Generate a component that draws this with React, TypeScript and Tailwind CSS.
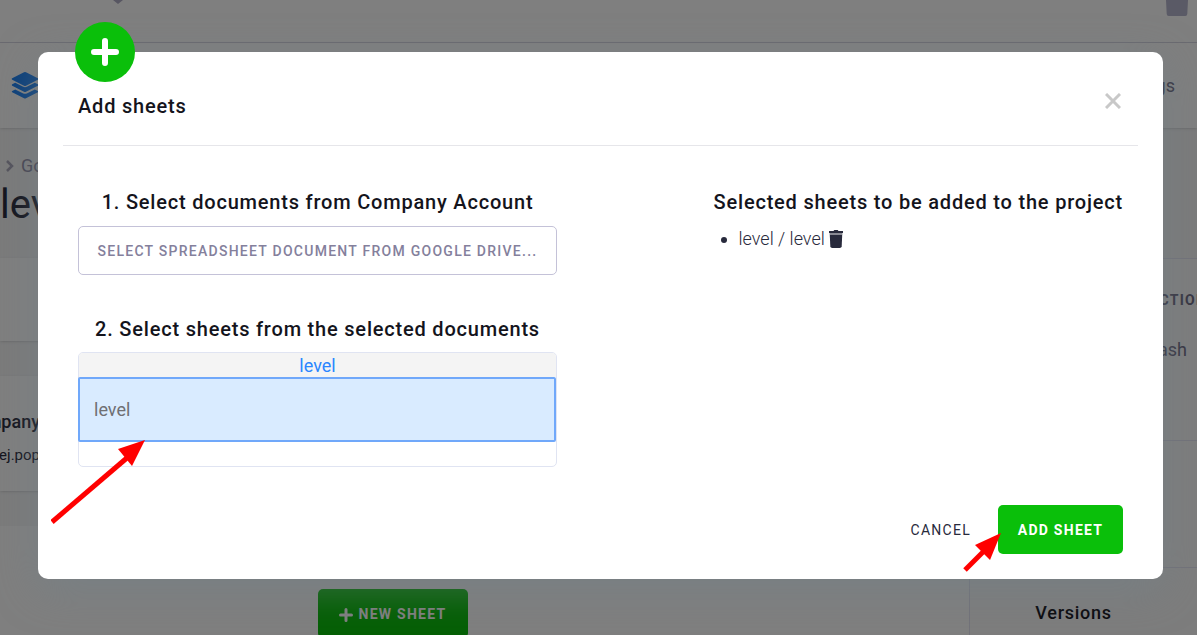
function Trash({ className }: { className: string }) {
  return (
    <svg viewBox="0 0 16 18" className={className} aria-hidden="true">
      <path fill="currentColor" d="M1 1h4.5l.8-1h3.4l.8 1H15v2H1z" />
      <path fill="currentColor" opacity=".55" d="M1.6 3h12.8v2H1.6z" />
      <path fill="currentColor" d="M1.8 5h12.4l-.5 11.2q-.1 1.8-2 1.8H4.3q-1.9 0-2-1.8z" />
    </svg>
  );
}

function Plus({ className }: { className: string }) {
  return (
    <svg viewBox="0 0 28 28" className={className} aria-hidden="true">
      <path d="M14 3v22M3 14h22" stroke="currentColor" strokeWidth="6" strokeLinecap="round" />
    </svg>
  );
}

function Layers() {
  return (
    <svg viewBox="0 0 28 27" className="h-[27px] w-7 shrink-0 text-[#1a80f5]" fill="currentColor" aria-hidden="true">
      <path d="M13 .3q1-.5 2 0l11.8 6q1 .7 0 1.4l-11.8 6q-1 .5-2 0L1.2 7.7q-1-.7 0-1.4z" />
      <path d="M1.2 12.3l3-1.5 8 4q1.8.8 3.6 0l8-4 3 1.5q1 .7 0 1.4l-11.8 6q-1 .5-2 0l-11.8-6q-1-.7 0-1.4z" />
      <path d="M1.2 18.9l3-1.5 8 4q1.8.8 3.6 0l8-4 3 1.5q1 .7 0 1.4l-11.8 6q-1 .5-2 0l-11.8-6q-1-.7 0-1.4z" />
    </svg>
  );
}

function Page() {
  return (
    <div className="flex h-full flex-col overflow-hidden bg-[#f6f6f7] text-[#282a3c]" inert>
      <header className="flex h-[43px] shrink-0 items-start justify-between border-b border-[#d8d8e4] bg-white pr-2 pl-28">
        <svg viewBox="0 0 12 4" className="h-1 w-3 text-[#afacc4]" aria-hidden="true">
          <path d="M1 0h10L6 4z" fill="currentColor" />
        </svg>
        <svg viewBox="0 0 22 16" className="h-4 w-6 text-[#b5b4cc]" aria-hidden="true">
          <path d="M0 0h22l-.7 14q-.1 2-2 2H2.7q-1.9 0-2-2z" fill="currentColor" />
        </svg>
      </header>
      <nav className="flex h-[85px] shrink-0 items-center justify-between bg-white pr-[22px] pl-[11px] shadow-sm">
        <Layers />
        <a href="#settings" className="text-[18px] text-[#6f6c85]">Settings</a>
      </nav>
      <div className="flex min-h-0 flex-1">
        <main className="flex flex-1 flex-col">
          <div className="h-[130px] shrink-0 pt-[26px]">
            <div className="flex items-center gap-[7px] pl-1.5 text-[18px] leading-6 text-[#8f8ca5]">
              <svg viewBox="0 0 8 12" className="h-3 w-2 text-[#aaa8ba]" fill="none" stroke="currentColor" strokeWidth="2.5" aria-hidden="true">
                <path d="M1 1l5 5-5 5" />
              </svg>
              <a href="#google">Google</a>
            </div>
            <h1 className="text-[40px] leading-[54px]">level</h1>
          </div>
          <section className="h-[83px] shrink-0 bg-white shadow-sm" />
          <section className="mt-[35px] h-[115px] shrink-0 bg-white pt-8 shadow-sm">
            <div className="flex w-10 flex-col items-end">
              <strong className="text-[18px] leading-7 font-medium">Company</strong>
              <span className="pt-[5px] text-[15px] leading-7">ej.pop</span>
            </div>
          </section>
          <section className="mt-[35px] flex flex-1 items-start justify-center bg-white pt-[63px] pr-[184px]">
            <button className="flex h-[49px] w-[150px] shrink-0 items-center justify-center gap-1.5 rounded-[5px] bg-[#0abf0a] pt-0.5 text-[14px] font-bold tracking-[0.09em] text-white">
              <Plus className="size-3.5" />
              NEW SHEET
            </button>
          </section>
        </main>
        <aside className="mt-[130px] flex w-[228px] shrink-0 flex-col border-t border-l border-[#e4e5f3] bg-[#fafafb] text-[#6f6c85]">
          <div className="flex h-[182px] shrink-0 flex-col items-end gap-6 border-b border-[#e4e5f3] pt-[29px]">
            <span className="-mr-5 text-[14px] leading-6 font-bold tracking-[0.09em]">ACTIONS</span>
            <a href="#trash" className="pr-2.5 text-[18px] leading-7">Trash</a>
          </div>
          <div className="h-[127px] shrink-0 border-b border-[#e4e5f3]" />
          <h2 className="pt-[33px] pr-5 text-center text-[18px] leading-6 font-medium tracking-[0.04em] text-[#14141c]">Versions</h2>
        </aside>
      </div>
    </div>
  );
}

const heading = "text-center text-[20px] leading-6 font-medium tracking-[0.04em] text-[#14141c]";

export default function App() {
  return (
    <div className="relative h-screen overflow-hidden font-[Roboto,sans-serif]">
      <Page />
      <div className="absolute inset-0 bg-black/50 pt-[52px] pr-[34px] pl-[38px]">
        <div role="dialog" aria-modal="true" aria-labelledby="title" className="relative h-[527px] rounded-[10px] bg-white px-[25px] text-[#282a3c] shadow-[0_10px_40px_rgba(113,130,138,0.5)]">
          <div className="absolute -top-[30px] left-[37px] flex size-[60px] items-center justify-center rounded-full bg-[#0abf0a] text-white">
            <Plus className="size-7" />
          </div>
          <header className="flex h-[94px] items-start justify-between border-b border-[#e6e6ea] px-[15px] pt-10">
            <h2 id="title" className="pt-0.5 text-[20px] leading-6 font-medium tracking-[0.04em] text-[#14141c]">Add sheets</h2>
            <button aria-label="Close" className="px-0.5 py-px text-[#c8c8c8]">
              <svg viewBox="0 0 16 16" className="size-4" fill="none" stroke="currentColor" strokeWidth="3" aria-hidden="true">
                <path d="M1 1l14 14M15 1L1 15" />
              </svg>
            </button>
          </header>
          <div className="flex items-start justify-between px-[15px] pt-11">
            <div className="w-[479px]">
              <h3 className={heading}>1. Select documents from Company Account</h3>
              <button className="mt-3 h-[49px] w-full rounded-[5px] border border-[#c4c2d8] pt-0.5 text-[14px] font-medium tracking-[0.09em] text-[#84809c]">
                SELECT SPREADSHEET DOCUMENT FROM GOOGLE DRIVE...
              </button>
              <h3 className={`mt-[42px] ${heading}`}>2. Select sheets from the selected documents</h3>
              <div className="mt-[11px] h-[115px] rounded-[5px] border border-[#e0e4f2]">
                <div className="h-6 rounded-t bg-[#f4f4f4] text-center text-[18px] leading-[26px] text-[#2b86ff]">level</div>
                <button aria-pressed="true" className="-ml-px flex h-[65px] w-[478px] items-center rounded-xs border-2 border-[#70a8fa] bg-[#d9ebff] px-3.5 text-[18px] text-[#6f6f73]">
                  level
                </button>
              </div>
            </div>
            <div>
              <h3 className={heading}>Selected sheets to be added to the project</h3>
              <ul className="mt-[13px] list-disc pl-[25px]">
                <li className="text-[18px] leading-6">
                  <span className="flex items-center gap-[3px]">
                    <span className="font-light">level / level</span>
                    <button aria-label="Remove sheet"><Trash className="h-[18px] w-4" /></button>
                  </span>
                </li>
              </ul>
            </div>
          </div>
          <footer className="flex items-center justify-end gap-[27px] px-[15px] pt-[38px]">
            <button className="pt-0.5 text-[14px] tracking-[0.09em]">CANCEL</button>
            <button className="h-[49px] w-[125px] rounded-[5px] bg-[#0abf0a] pt-0.5 text-[14px] font-bold tracking-[0.09em] text-white">ADD SHEET</button>
          </footer>
          <svg viewBox="0 0 94 84" className="pointer-events-none absolute top-[388px] left-[13px] h-[84px] w-[94px]" aria-hidden="true">
            <path d="M1 82L77 17" stroke="red" strokeWidth="5" />
            <path d="M94 0L67 9l14 17z" fill="red" />
          </svg>
          <svg viewBox="0 0 38 40" className="pointer-events-none absolute top-[480px] left-[925px] h-10 w-[38px]" aria-hidden="true">
            <path d="M2 38L23 17" stroke="red" strokeWidth="5" />
            <path d="M38 1L12 13l15 15z" fill="red" />
          </svg>
        </div>
      </div>
    </div>
  );
}
